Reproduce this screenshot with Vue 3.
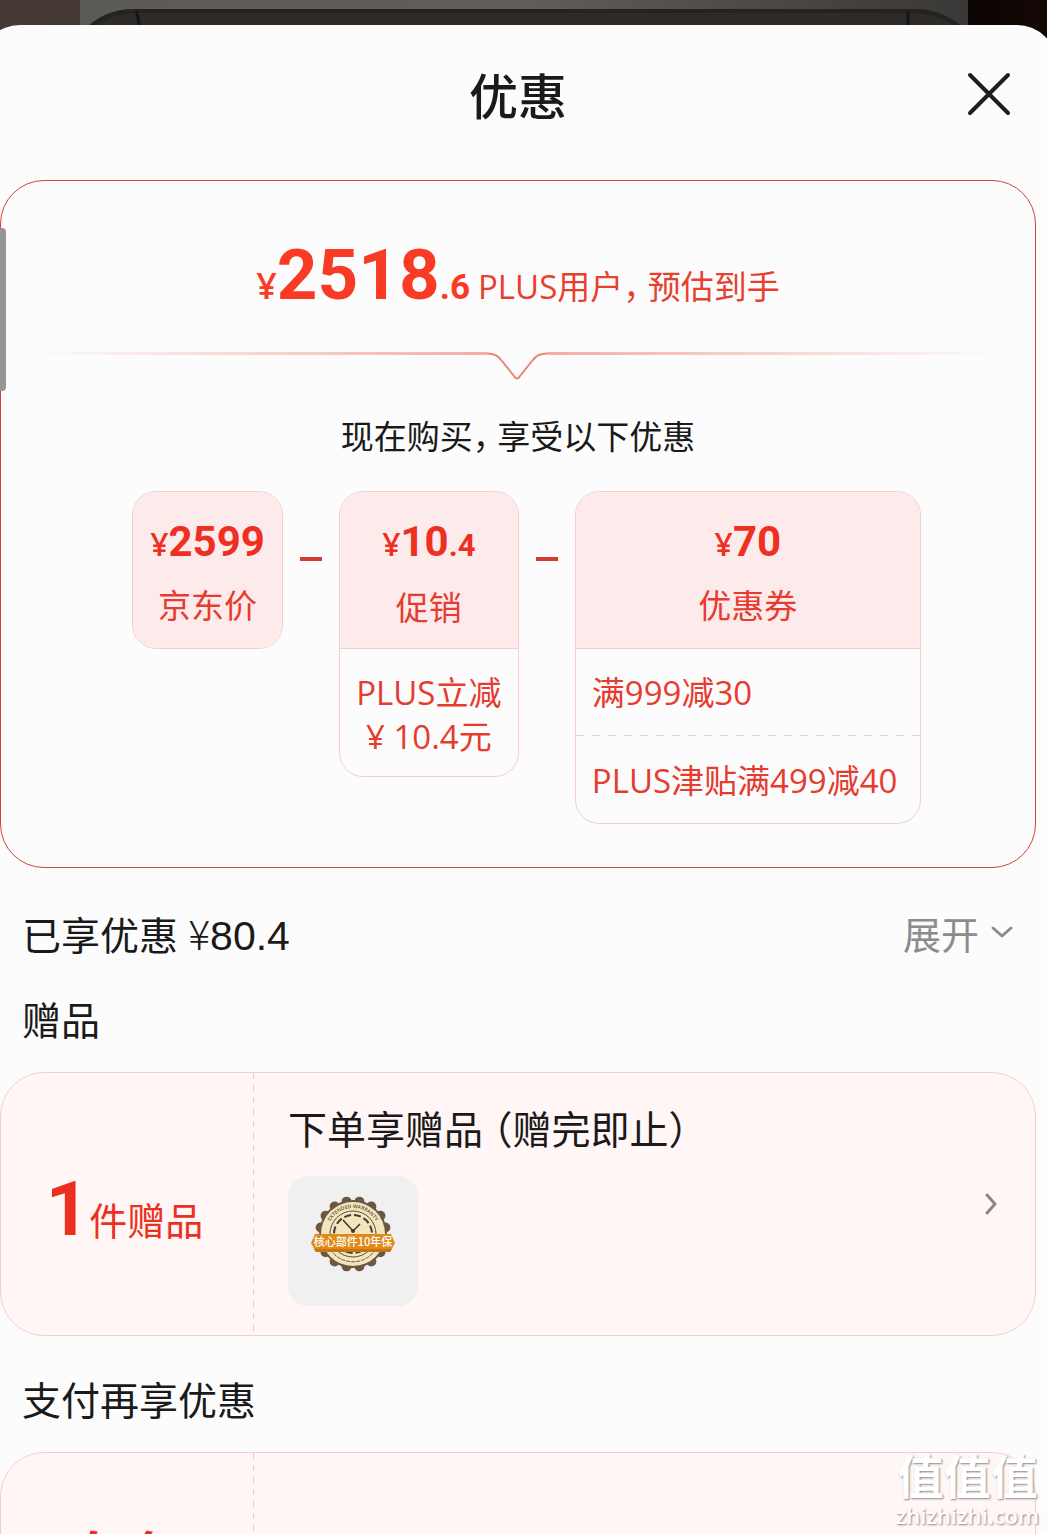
<script setup>
const deductions = [
  { whole: '2599', cents: '', label: '京东价', kind: 'base', lines: [] },
  { whole: '10', cents: '.4', label: '促销', kind: 'promo', lines: ['PLUS立减\n¥ 10.4元'] },
  { whole: '70', cents: '', label: '优惠券', kind: 'coupon', lines: ['满999减30', 'PLUS津贴满499减40'] },
]

const scallops = Array.from({ length: 16 }, (_, i) => {
  const a = ((i + 0.5) * Math.PI) / 8
  return { x: 65 + 33 * Math.cos(a), y: 58 + 33 * Math.sin(a) }
})
</script>

<template>
  <div class="page">
    <svg class="backdrop" viewBox="0 0 1047 60" preserveAspectRatio="none" aria-hidden="true">
      <defs>
        <linearGradient id="wall" x1="0" x2="1" y1="0" y2="0">
          <stop offset="0" stop-color="#453a35" />
          <stop offset="0.5" stop-color="#3a322e" />
          <stop offset="0.93" stop-color="#0b0504" />
          <stop offset="1" stop-color="#140805" />
        </linearGradient>
        <linearGradient id="shell" x1="0" x2="1" y1="0" y2="0">
          <stop offset="0" stop-color="#5c5a57" />
          <stop offset="0.5" stop-color="#5f5e5a" />
          <stop offset="1" stop-color="#3a3836" />
        </linearGradient>
      </defs>
      <rect width="1047" height="60" fill="url(#wall)" />
      <rect x="80" width="888" height="60" fill="url(#shell)" />
      <path d="M84 30Q104 9 134 9H915Q944 9 966 30Z" fill="#252320" />
      <path d="M90 32Q108 13 136 13H913Q942 13 960 32Z" fill="#2d2a27" />
      <path d="M136 11Q139 18 139 26M908 11V26" stroke="#171513" stroke-width="3" fill="none" />
    </svg>

    <main class="sheet">
      <header class="header">
        <h1>优惠</h1>
        <button class="close" type="button" aria-label="关闭">
          <svg width="46" height="46" viewBox="0 0 46 46">
            <path d="M4 4L42 42M42 4L4 42" stroke="#1d1e20" stroke-width="4" stroke-linecap="round" />
          </svg>
        </button>
      </header>

      <section class="summary">
        <p class="final">
          <span class="yen">¥</span><span class="big">2518</span><span class="cents">.6</span>
          <span class="note">PLUS用户，<span class="clause">预估到手</span></span>
        </p>
        <div class="divider" aria-hidden="true">
          <i class="rule"></i>
          <svg width="60" height="30" viewBox="0 0 60 30" fill="none">
            <path d="M0 1.500C8 1.500 11 4 15 9L27 24Q30 29 33 24L45 9C49 4 52 1.500 60 1.500" stroke="#ec8279" stroke-width="2" />
          </svg>
          <i class="rule right"></i>
        </div>
        <h2>现在购买，<span class="clause">享受以下优惠</span></h2>
        <div class="breakdown">
          <template v-for="(d, i) in deductions" :key="d.label">
            <span v-if="i" class="minus"></span>
            <div class="box" :class="d.kind">
              <div class="top">
                <p class="amount"><span class="yen-s">¥</span>{{ d.whole }}<span v-if="d.cents" class="small">{{ d.cents }}</span></p>
                <p class="label">{{ d.label }}</p>
              </div>
              <ul v-if="d.lines.length">
                <li v-for="l in d.lines" :key="l">{{ l }}</li>
              </ul>
            </div>
          </template>
        </div>
      </section>

      <div class="row">
        <p>已享优惠 <span class="saved"><span class="thin">¥</span>80.4</span></p>
        <button class="expand" type="button">
          展开
          <svg width="24" height="16" viewBox="0 0 24 16" fill="none">
            <path d="M3 4L12 12L21 4" stroke="#8c8c8c" stroke-width="3" stroke-linecap="round" stroke-linejoin="round" />
          </svg>
        </button>
      </div>
      <h3>赠品</h3>
      <a class="ticket" href="#gift">
        <div class="stub"><b>1</b>件赠品</div>
        <div class="body">
          <p>下单享赠品<span class="aside">（赠完即止）</span></p>
          <div class="thumb">
            <svg viewBox="0 0 130 130" width="130" height="130">
              <defs>
                <path id="arc" d="M39 58A26 26 0 0 1 91 58" />
              </defs>
              <g fill="#6b5742">
                <circle v-for="(s, i) in scallops" :key="i" :cx="s.x" :cy="s.y" r="5" />
                <circle cx="65" cy="58" r="34" />
              </g>
              <circle cx="65" cy="58" r="32" fill="#f3e5bd" />
              <circle cx="65" cy="58" r="23" fill="none" stroke="#5a4c38" stroke-width="1" />
              <circle cx="65" cy="58" r="19" fill="none" stroke="#4a3e2e" stroke-width="2" stroke-dasharray="7 3" />
              <path d="M40 69A27 27 0 0 0 90 69" fill="none" stroke="#6b5742" stroke-width="1" stroke-dasharray="4 1" />
              <text class="ring"><textPath href="#arc" startOffset="50%">EXTENDED WARRANTY</textPath></text>
              <path d="M55 44L65 55L72 48" fill="none" stroke="#40372b" stroke-width="1.500" />
              <circle cx="65" cy="55" r="2" fill="#40372b" />
              <path d="M27 58H103L107 67L102 76H28L23 67Z" fill="#e08a1c" />
              <path d="M28 76H102L104 73H26Z" fill="#c47412" />
              <text class="ribbon" x="65" y="70">核心部件10年保</text>
            </svg>
          </div>
        </div>
        <svg class="go" width="16" height="24" viewBox="0 0 16 24" fill="none">
          <path d="M4 3L12 12L4 21" stroke="#8a8684" stroke-width="3" stroke-linecap="round" stroke-linejoin="round" />
        </svg>
      </a>
      <h3 class="pay">支付再享优惠</h3>
      <a class="ticket" href="#pay">
        <div class="stub bank">白条</div>
        <div class="body"></div>
      </a>
    </main>

    <i class="scrollbar"></i>
    <div class="mark"><strong>值值值</strong><span>zhizhizhi.com</span></div>
  </div>
</template>

<style>
body {
  margin: 0;
}
</style>

<style scoped>
.page {
  position: relative;
  height: 100vh;
  overflow: hidden;
  font-family: "Open Sans", "Noto Sans CJK SC", sans-serif;
  color: #1a1a1a;
}
.page * {
  box-sizing: border-box;
}
p, h1, h2, h3, ul {
  margin: 0;
  padding: 0;
  font-weight: 400;
}
button {
  border: 0;
  padding: 0;
  background: none;
  font: inherit;
  cursor: pointer;
}
svg {
  display: block;
}
.backdrop {
  position: absolute;
  top: 0;
  left: 0;
  width: 100%;
  height: 60px;
}
.sheet {
  position: relative;
  margin: 25px -10px 0 -20px;
  padding: 0 21px 0 20px;
  border-radius: 40px 40px 0 0;
  background: #fcfcfc;
  min-height: 100vh;
}
.header {
  display: grid;
  grid-template-columns: 1fr auto 1fr;
  align-items: center;
  height: 142px;
  margin-bottom: 13px;
  padding: 0 24px;
}
h1 {
  grid-column: 2;
  font-size: 49px;
  line-height: 60px;
  font-weight: 500;
}
.close {
  justify-self: end;
  margin-bottom: 4px;
}
.summary {
  border: 1px solid #d8413a;
  border-radius: 44px;
  padding-bottom: 43px;
}
.final {
  display: flex;
  justify-content: center;
  align-items: baseline;
  height: 171px;
  padding-top: 49px;
  line-height: 90px;
  color: #f93a24;
}
.yen {
  font-size: 36px;
  font-weight: 600;
}
.big {
  font: 700 71px/90px Roboto, sans-serif;
}
.cents {
  font: 700 35px/90px Roboto, sans-serif;
}
.note {
  margin-left: 8px;
  font-size: 33px;
  color: #e8402f;
}
.note,
h2,
.body p {
  font-feature-settings: "halt";
}
.clause {
  margin-left: 8px;
}
.divider {
  display: flex;
  padding: 0 32px 0 29px;
}
.rule {
  flex: 1;
  height: 3px;
  background: linear-gradient(to right, #fcfcfc, #f3ada6);
}
.rule.right {
  background: linear-gradient(to left, #fcfcfc, #f3ada6);
}
h2 {
  margin: 31px 0 30px;
  font-size: 33px;
  line-height: 48px;
  text-align: center;
}
.breakdown {
  display: flex;
  justify-content: center;
  align-items: flex-start;
  padding-left: 17px;
}
.minus {
  width: 22px;
  height: 4px;
  margin: 66px 17px 0;
  background: #d23c34;
}
.box {
  border: 1px solid #f5cfcf;
  border-radius: 24px;
  overflow: hidden;
  color: #e63b2e;
}
.promo {
  min-width: 180px;
}
.coupon {
  min-width: 346px;
}
.top {
  height: 156px;
  padding: 25px 17px 0;
  background: #fdeaea;
  text-align: center;
}
.amount {
  font: 700 42px/50px Roboto, sans-serif;
  color: #ee3022;
}
.yen-s {
  font: 600 32px/50px "Open Sans", sans-serif;
}
.small {
  font-size: 31px;
}
.label {
  margin-top: 13px;
  font-size: 33px;
  line-height: 48px;
}
ul {
  list-style: none;
  border-top: 1px solid #f5cfcf;
  font-size: 33px;
  line-height: 44px;
  white-space: pre-line;
}
.promo ul {
  text-align: center;
}
li {
  padding: 22px 16px 20px;
}
.promo li {
  padding-bottom: 17px;
}
li + li {
  padding-top: 24px;
  background: repeating-linear-gradient(to right, #f5cfcf 0 8px, transparent 8px 16px) top / 100% 1px no-repeat;
}
.row {
  display: flex;
  justify-content: space-between;
  align-items: center;
  height: 88px;
  margin-top: 20px;
  padding: 0 22px;
  font-size: 39px;
}
.saved {
  font-family: "Liberation Sans", sans-serif;
  font-size: 41px;
}
.thin {
  font-family: "Noto Sans CJK SC", sans-serif;
  font-weight: 300;
}
.expand {
  display: flex;
  align-items: center;
  gap: 11px;
  font-size: 38px;
  color: #8c8c8c;
}
h3 {
  margin-bottom: 8px;
  padding: 0 22px;
  font-size: 39px;
  line-height: 88px;
}
.pay {
  margin-top: 20px;
}
.ticket {
  display: flex;
  align-items: center;
  height: 264px;
  border: 1px solid #f3cfcc;
  border-radius: 44px;
  background: #fff6f5;
  color: inherit;
  text-decoration: none;
}
.stub {
  display: flex;
  align-items: baseline;
  justify-content: center;
  width: 253px;
  height: 100%;
  padding: 86px 6px 0 0;
  background: repeating-linear-gradient(to bottom, #e6cccb 0 6px, transparent 6px 12px) right / 1px 100% no-repeat;
  font-size: 38px;
  line-height: 100px;
  color: #ea3020;
}
.stub b {
  font: 700 76px/100px Roboto, sans-serif;
}
.bank {
  padding-top: 56px;
  font-size: 60px;
  font-weight: 500;
}
.body {
  flex: 1;
  align-self: stretch;
  padding: 26px 0 0 34px;
  font-size: 39px;
  line-height: 60px;
}
.aside {
  margin-left: 10px;
}
.thumb {
  width: 130px;
  margin-top: 17px;
  border-radius: 20px;
  background: #f0f0f0;
}
.ring {
  font: 600 5px "Open Sans", sans-serif;
  fill: #5a4c38;
  text-anchor: middle;
}
.ribbon {
  font: 500 11px "Noto Sans CJK SC", sans-serif;
  fill: #fff;
  text-anchor: middle;
}
.go {
  margin-right: 36px;
}
.scrollbar {
  position: absolute;
  top: 228px;
  left: 0;
  width: 6px;
  height: 163px;
  border-radius: 0 4px 4px 0;
  background: #969696;
}
.mark {
  position: absolute;
  right: 8px;
  bottom: 5px;
  display: flex;
  flex-direction: column;
  align-items: center;
  color: #fff;
  text-shadow: 1px 1px 2px #888;
}
.mark strong {
  font-size: 47px;
  line-height: 50px;
}
.mark span {
  font-size: 22px;
  font-weight: 600;
  line-height: 28px;
}
</style>
